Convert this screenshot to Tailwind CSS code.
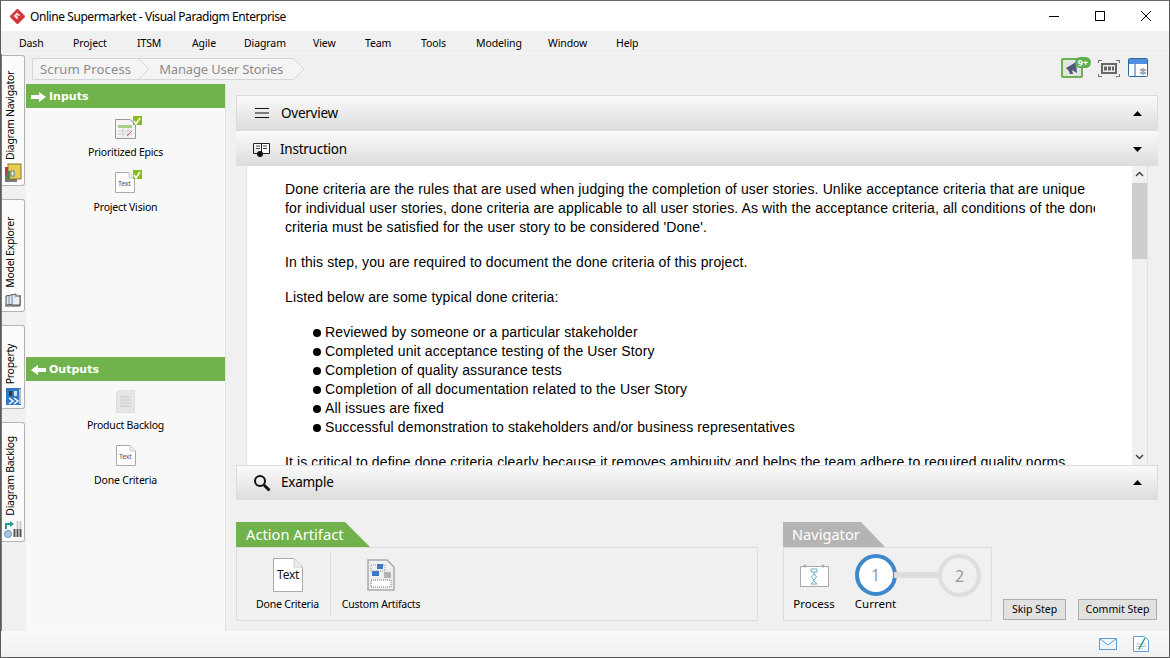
<!DOCTYPE html>
<html lang="en">
<head>
<meta charset="UTF-8">
<title>Online Supermarket - Visual Paradigm Enterprise</title>
<script src="https://cdn.jsdelivr.net/npm/@tailwindcss/browser@4"></script>
</head>
<body class="bg-[#f0f0f0] overflow-hidden">
<div class="w-[1170px] h-[658px] flex flex-col border border-[#5a5a5a] border-t-[#6a6a6a] text-black text-[12px] font-['Noto_Sans',sans-serif] overflow-hidden">

  <!-- title bar -->
  <div class="h-[30px] bg-white flex items-center shrink-0">
    <svg class="ml-[9px] w-[15px] h-[15px]" viewBox="0 0 15 15"><path d="M7.500 0 15 7.500 7.500 15 0 7.500Z" fill="#d0353a" stroke="#d0353a" stroke-linejoin="round"/><path d="M3.500 7 7 3.500 10.500 6.500 8 7 7.500 10.500Z" fill="#fbe4e4"/><path d="M6.500 6.500 8 6 7.500 8Z" fill="#d0353a"/></svg>
    <span class="ml-[5px] text-[12px] tracking-[-0.43px] pt-[1px]">Online Supermarket - Visual Paradigm Enterprise</span>
    <div class="ml-auto flex items-center">
      <svg class="w-[46px] h-[30px]" viewBox="0 0 46 30"><path d="M18 15.500H28" stroke="#000" fill="none"/></svg>
      <svg class="w-[46px] h-[30px] ml-[0px]" viewBox="0 0 46 30"><rect x="18.500" y="10.500" width="9" height="9" stroke="#000" fill="none"/></svg>
      <svg class="w-[46px] h-[30px]" viewBox="0 0 46 30"><path d="M18 10 28 20M28 10 18 20" stroke="#000" fill="none"/></svg>
    </div>
  </div>

  <!-- menu bar -->
  <div class="h-[22px] bg-[#f0f0f0] flex items-center shrink-0 relative text-[10.500px] tracking-[-0.1px] pt-[3px]">
    <span class="absolute left-[18px]">Dash</span>
    <span class="absolute left-[72px]">Project</span>
    <span class="absolute left-[136px]">ITSM</span>
    <span class="absolute left-[191px]">Agile</span>
    <span class="absolute left-[243px]">Diagram</span>
    <span class="absolute left-[312px]">View</span>
    <span class="absolute left-[364px]">Team</span>
    <span class="absolute left-[420px]">Tools</span>
    <span class="absolute left-[475px]">Modeling</span>
    <span class="absolute left-[547px]">Window</span>
    <span class="absolute left-[615px]">Help</span>
  </div>

  <div class="flex-1 flex min-h-0 border-t border-[#f8f8f8]">
    <!-- left rail -->
    <div class="w-[25px] shrink-0 flex flex-col pl-[0px] pt-[1px] text-[10.500px] tracking-[-0.3px] border-l border-[#7a7a7a]">
      <div class="w-[23px] h-[131px] bg-[#fbfbfb] border border-l-0 border-[#b4b4b4] rounded-r-[3px] flex flex-col items-center justify-end pb-[2px] gap-[3px]">
        <span class="[writing-mode:vertical-rl] rotate-180 leading-none whitespace-nowrap mr-[5px]">Diagram Navigator</span>
        <svg class="w-[18px] h-[20px]" viewBox="0 0 18 20"><rect x="1" y="9" width="12" height="10" fill="#777"/><rect x="4" y="1" width="13" height="15" fill="#e6cc55" stroke="#8a7a20"/><rect x="1" y="4" width="3" height="8" fill="#c8363a"/><rect x="3" y="8" width="3" height="8" fill="#2a9a3a"/><rect x="7" y="8" width="3" height="5" fill="#fff" stroke="#4a7ab0"/></svg>
      </div>
      <div class="w-[23px] h-[113px] mt-[13px] bg-[#fbfbfb] border border-l-0 border-[#b4b4b4] rounded-r-[3px] flex flex-col items-center justify-end pb-[3px] gap-[5px]">
        <span class="[writing-mode:vertical-rl] rotate-180 leading-none whitespace-nowrap mr-[5px]">Model Explorer</span>
        <svg class="w-[18px] h-[15px]" viewBox="0 0 18 15"><path d="M1 13H16V2" stroke="#444" fill="#ddd"/><path d="M2 3 12 1V11L2 12Z" fill="#dfe6ee" stroke="#555"/><path d="M12 3H16V12H8" fill="#eee" stroke="#555"/><path d="M5 3V11M8 2V11" stroke="#6b8cb0"/></svg>
      </div>
      <div class="w-[23px] h-[84px] mt-[13px] bg-[#fbfbfb] border border-l-0 border-[#b4b4b4] rounded-r-[3px] flex flex-col items-center justify-end pb-[3px] gap-[4px]">
        <span class="[writing-mode:vertical-rl] rotate-180 leading-none whitespace-nowrap mr-[5px]">Property</span>
        <svg class="w-[15px] h-[17px]" viewBox="0 0 15 17"><rect width="15" height="17" fill="#2f78c4"/><rect x="3" y="3" width="3" height="5" fill="#334"/><rect x="8" y="3" width="3" height="5" fill="#cfe2f5"/><path d="M3 10 7 13 3 16M8 10 12 13 8 16" stroke="#fff" fill="none" stroke-width="1.500"/><rect x="13" y="1" width="2" height="15" fill="#bbb"/></svg>
      </div>
      <div class="w-[23px] h-[120px] mt-[13px] bg-[#fbfbfb] border border-l-0 border-[#b4b4b4] rounded-r-[3px] flex flex-col items-center justify-end pb-[3px] gap-[4px]">
        <span class="[writing-mode:vertical-rl] rotate-180 leading-none whitespace-nowrap mr-[5px]">Diagram Backlog</span>
        <svg class="w-[18px] h-[18px]" viewBox="0 0 18 18"><path d="M2 9V4H7" stroke="#2a9a90" stroke-width="2" fill="none"/><path d="M6 1 10 4 6 7Z" fill="#2a9a90"/><circle cx="4" cy="14" r="3.500" fill="#a9c8e6" stroke="#6a94bc"/><path d="M10.500 9V17M13.500 9V17M16.500 9V17" stroke="#555" stroke-width="2"/><path d="M13.500 1V9M16.500 1V9" stroke="#ccc" stroke-width="2"/></svg>
      </div>
    </div>

    <div class="flex-1 flex flex-col min-w-0">
      <!-- breadcrumb row -->
      <div class="h-[30px] shrink-0 flex items-start">
        <div class="relative ml-[6px] mt-[4px] w-[272px] h-[22px] text-[13px] text-[#8c8c8c] flex items-center pt-[2px]">
          <svg class="absolute inset-0" width="272" height="22" viewBox="0 0 272 22"><path d="M.5.500H106.500L117 11 106.500 21.500H.5Z" fill="#f4f4f4" stroke="#d6d6d6"/><path d="M106.500.5H261.500L272 11 261.500 21.500H106.500L117 11Z" fill="#f4f4f4" stroke="#d6d6d6"/></svg>
          <span class="relative ml-[8px] tracking-[0.15px]">Scrum Process</span>
          <span class="relative ml-[28px] tracking-[-0.15px]">Manage User Stories</span>
        </div>
        <div class="ml-auto flex items-center mr-[21px] mt-[4px]">
          <div class="relative w-[22px] h-[20px] bg-[#e4e4e4] border-2 border-[#6fb04f] rounded-[2px] flex items-center justify-center">
            <svg class="w-[14px] h-[14px]" viewBox="0 0 14 14"><path d="M1 7 11 1 12 12 7 9 8 13 5 13 3.500 9.500Z" fill="#4d5d75"/></svg>
            <span class="absolute -top-[3px] left-[12px] w-[16px] h-[11px] rounded-full bg-[#5cb050] text-white text-[9px] leading-[11px] text-center font-bold">9+</span>
          </div>
          <svg class="w-[22px] h-[17px] ml-[15px]" viewBox="0 0 22 17"><path d="M4 4H18V13H4Z" fill="#eee" stroke="#666" stroke-width="2"/><path d="M6 6.500H9V10.500H6ZM10 6.500H13V10.500H10ZM14 6.500H16V10.500H14Z" fill="#666"/><path d="M0 3V0H4M18 0H22V3M0 14V17H4M18 17H22V14" fill="none" stroke="#777" stroke-width="2"/></svg>
          <svg class="w-[20px] h-[20px] ml-[8px]" viewBox="0 0 20 20"><rect x=".5" y=".5" width="19" height="18" rx="1" fill="#fff" stroke="#2c6a9a"/><rect x="1" y="1" width="18" height="5" fill="#4e8fe0"/><path d="M7 6V19" stroke="#2c6a9a"/><path d="M11 12 15 10 19 12 15 14ZM11 15 15 13 19 15 15 17Z" fill="#9aa8b8"/></svg>
        </div>
      </div>

      <div class="flex-1 flex min-h-0">
        <!-- inputs / outputs panel -->
        <div class="w-[199px] shrink-0 bg-[#f8f8f8] flex flex-col text-[10.500px] tracking-[-0.2px] border-r border-[#e2e2e2] box-content">
          <div class="h-[24px] bg-[#70b34c] flex items-center pl-[5px] text-white font-bold font-['DejaVu_Sans',sans-serif] text-[11px] gap-[3px] pt-[2px] tracking-normal">
            <svg class="w-[15px] h-[10px]" viewBox="0 0 15 10"><path d="M0 3H8V0L15 5 8 10V7H0Z" fill="#fff"/></svg>
            <span>Inputs</span>
          </div>
          <div class="h-[249px] flex flex-col items-center pt-[8px]">
            <div class="relative w-[26px] h-[24px]">
              <svg class="w-[21px] h-[20px] mt-[3px] ml-[2px]" viewBox="0 0 21 20"><path d="M.5.500H15L20.500 5.500V19.500H.5Z" fill="#f4f4f4" stroke="#999"/><rect x="3" y="6" width="14" height="3" fill="#a8d08d"/><path d="M3 12H17M3 15H17M8 9V18M13 9V18" stroke="#ccc"/><path d="M12 17 17 12" stroke="#c86060"/></svg>
              <span class="absolute top-0 right-[-3px] w-[9px] h-[9px] bg-[#8cbc1c] flex items-center justify-center"><svg class="w-[8px] h-[8px]" viewBox="0 0 8 8"><path d="M1 4 3 7 7 1" stroke="#fff" stroke-width="1.500" fill="none"/></svg></span>
            </div>
            <span class="mt-[5px] leading-[15px]">Prioritized Epics</span>
            <div class="relative w-[26px] h-[24px] mt-[10px]">
              <svg class="w-[20px] h-[21px] mt-[2px] ml-[2px]" viewBox="0 0 20 21"><path d="M.5.500H14L19.500 6V20.500H.5Z" fill="#fff" stroke="#aaa"/><path d="M14 .5V6H19.500" fill="#eee" stroke="#ccc"/><text x="3" y="14" font-size="7" fill="#555" font-family="'Noto Sans',sans-serif">Text</text></svg>
              <span class="absolute top-0 right-[-3px] w-[9px] h-[9px] bg-[#8cbc1c] flex items-center justify-center"><svg class="w-[8px] h-[8px]" viewBox="0 0 8 8"><path d="M1 4 3 7 7 1" stroke="#fff" stroke-width="1.500" fill="none"/></svg></span>
            </div>
            <span class="mt-[6px] leading-[15px]">Project Vision</span>
          </div>
          <div class="h-[24px] bg-[#70b34c] flex items-center pl-[5px] text-white font-bold font-['DejaVu_Sans',sans-serif] text-[11px] gap-[3px] pt-[2px] tracking-normal">
            <svg class="w-[15px] h-[10px]" viewBox="0 0 15 10"><path d="M15 3H7V0L0 5 7 10V7H15Z" fill="#fff"/></svg>
            <span>Outputs</span>
          </div>
          <div class="flex flex-col items-center pt-[9px]">
            <svg class="w-[19px] h-[23px]" viewBox="0 0 19 23"><path d="M3 0H18.500V22.500H.5V3Z" fill="#e6e6e6" stroke="#ddd"/><path d="M4 7H15M4 10H15M4 13H15M4 16H15" stroke="#c8c8c8"/></svg>
            <span class="mt-[5px] leading-[15px]">Product Backlog</span>
            <svg class="w-[20px] h-[21px] mt-[12px]" viewBox="0 0 20 21"><path d="M.5.500H14L19.500 6V20.500H.5Z" fill="#fff" stroke="#aaa"/><path d="M14 .5V6H19.500" fill="#eee" stroke="#ccc"/><text x="3" y="14" font-size="7" fill="#555" font-family="'Noto Sans',sans-serif">Text</text></svg>
            <span class="mt-[7px] leading-[15px]">Done Criteria</span>
          </div>
        </div>

        <!-- main column -->
        <div class="flex-1 min-w-0 flex flex-col pl-[10px] pr-[11px] pt-[11px]">
          <div class="h-[405px] flex flex-col shrink-0 text-[13.500px] tracking-[-0.25px]">
            <div class="h-[36px] shrink-0 border border-b-0 border-[#dcdcdc] bg-gradient-to-b from-[#fafafa] to-[#dcdcdc] flex items-center pl-[17px] pr-[15px] pb-[1px]">
              <svg class="w-[16px] h-[12px]" viewBox="0 0 16 12"><path d="M1 1.500H15M1 6H15M1 10.500H15" stroke="#111"/></svg>
              <span class="ml-[11px]">Overview</span>
              <svg class="ml-auto w-[9px] h-[5px]" viewBox="0 0 10 6" preserveAspectRatio="none"><path d="M5 0 10 6H0Z" fill="#000"/></svg>
            </div>
            <div class="h-[35px] shrink-0 bg-gradient-to-b from-[#fafafa] to-[#dcdcdc] flex items-center pl-[17px] pr-[16px] pt-[1px]">
              <svg class="w-[17px] h-[15px]" viewBox="0 0 17 15"><path d="M.5 1.500H8.500V11M8.500 1.500H16.500V11.500H9" fill="#fff" stroke="#222"/><path d="M.5 1.500V11.500H4" stroke="#222" fill="none"/><path d="M3 4H7M3 6.500H7M10 4H14M10 6.500H14" stroke="#444"/><circle cx="7" cy="12" r="3" fill="#111"/></svg>
              <span class="ml-[10px]">Instruction</span>
              <svg class="ml-auto w-[9px] h-[5px]" viewBox="0 0 10 6" preserveAspectRatio="none"><path d="M0 0H10L5 6Z" fill="#000"/></svg>
            </div>
            <div class="h-[299px] shrink-0 ml-[10px] mr-[10px] bg-white border-l border-[#e0e0e0] border-r flex min-h-0 overflow-hidden">
              <div class="flex-1 min-w-0 pl-[38px] pr-[37px] pt-[14px] overflow-hidden">
                <div class="font-['Liberation_Sans',sans-serif] text-[14px] tracking-[0.115px] leading-[19px] whitespace-nowrap overflow-hidden">
                  <p>Done criteria are the rules that are used when judging the completion of user stories. Unlike acceptance criteria that are unique</p>
                  <p>for individual user stories, done criteria are applicable to all user stories. As with the acceptance criteria, all conditions of the done</p>
                  <p>criteria must be satisfied for the user story to be considered 'Done'.</p>
                  <p class="mt-[16px]">In this step, you are required to document the done criteria of this project.</p>
                  <p class="mt-[16px]">Listed below are some typical done criteria:</p>
                  <ul class="mt-[16px] ml-[28px]">
                    <li class="flex items-center gap-[4px]"><span class="w-[8px] h-[8px] rounded-full bg-black"></span><span>Reviewed by someone or a particular stakeholder</span></li>
                    <li class="flex items-center gap-[4px]"><span class="w-[8px] h-[8px] rounded-full bg-black"></span><span>Completed unit acceptance testing of the User Story</span></li>
                    <li class="flex items-center gap-[4px]"><span class="w-[8px] h-[8px] rounded-full bg-black"></span><span>Completion of quality assurance tests</span></li>
                    <li class="flex items-center gap-[4px]"><span class="w-[8px] h-[8px] rounded-full bg-black"></span><span>Completion of all documentation related to the User Story</span></li>
                    <li class="flex items-center gap-[4px]"><span class="w-[8px] h-[8px] rounded-full bg-black"></span><span>All issues are fixed</span></li>
                    <li class="flex items-center gap-[4px]"><span class="w-[8px] h-[8px] rounded-full bg-black"></span><span>Successful demonstration to stakeholders and/or business representatives</span></li>
                  </ul>
                  <p class="mt-[16px]">It is critical to define done criteria clearly because it removes ambiguity and helps the team adhere to required quality norms.</p>
                </div>
              </div>
              <!-- scrollbar -->
              <div class="w-[15px] shrink-0 bg-[#f0f0f0] flex flex-col items-center">
                <svg class="w-[15px] h-[17px]" viewBox="0 0 15 17"><path d="M4 10 7.500 6.500 11 10" stroke="#444" stroke-width="1.500" fill="none"/></svg>
                <div class="w-[15px] h-[76px] bg-[#cdcdcd]"></div>
                <svg class="w-[15px] h-[17px] mt-auto" viewBox="0 0 15 17"><path d="M4 7 7.500 10.500 11 7" stroke="#444" stroke-width="1.500" fill="none"/></svg>
              </div>
            </div>
            <div class="h-[35px] shrink-0 border border-[#dcdcdc] border-b-0 bg-gradient-to-b from-[#fafafa] to-[#dcdcdc] flex items-center pl-[16px] pr-[15px] pb-[1px]">
              <svg class="w-[18px] h-[18px]" viewBox="0 0 18 18"><circle cx="7" cy="7" r="5" fill="none" stroke="#111" stroke-width="2"/><path d="M11 11 16.500 16.500" stroke="#111" stroke-width="3"/></svg>
              <span class="ml-[10px]">Example</span>
              <svg class="ml-auto w-[9px] h-[5px]" viewBox="0 0 10 6" preserveAspectRatio="none"><path d="M5 0 10 6H0Z" fill="#000"/></svg>
            </div>
          </div>

          <!-- bottom row -->
          <div class="mt-[22px] flex items-start">
            <div class="w-[522px]">
              <div class="h-[25px] w-[134px] bg-[#70b34c] [clip-path:polygon(0_0,109px_0,134px_100%,0_100%)] text-white text-[14.700px] flex items-center pl-[10px]">Action Artifact</div>
              <div class="h-[74px] border border-[#dcdcdc] flex items-stretch text-[10.500px] tracking-[-0.2px]">
                <div class="w-[94px] my-[4px] pl-[8px] border-r border-[#dcdcdc] flex flex-col items-center pt-[6px]">
                  <svg class="w-[30px] h-[34px]" viewBox="0 0 30 34"><path d="M.5.500H21L29.500 9V33.500H.5Z" fill="#fff" stroke="#aaa"/><path d="M21 .5V9H29.500" fill="#eee" stroke="#ccc"/><text x="4" y="21" font-size="12" fill="#111" font-family="'Noto Sans',sans-serif">Text</text></svg>
                  <span class="mt-[5px] leading-[15px]">Done Criteria</span>
                </div>
                <div class="w-[100px] my-[4px] flex flex-col items-center pt-[7px]">
                  <svg class="w-[28px] h-[32px]" viewBox="0 0 28 32"><path d="M1 1H20L27 8V31H1Z" fill="#eee" stroke="#aaa" stroke-width="1.500"/><rect x="4" y="6" width="14" height="6" fill="none" stroke="#999" stroke-dasharray="1 1"/><rect x="10" y="5" width="6" height="5" fill="#3f77c4"/><rect x="5" y="12" width="7" height="5" fill="#3f77c4"/><path d="M17 14H24M17 16H24M17 18H24" stroke="#777"/><rect x="4" y="21" width="20" height="7" fill="#fff" stroke="#777" stroke-dasharray="1 1"/></svg>
                  <span class="mt-[6px] leading-[15px]">Custom Artifacts</span>
                </div>
              </div>
            </div>
            <div class="ml-[25px] w-[209px]">
              <div class="h-[25px] w-[102px] bg-[#b4b4b4] [clip-path:polygon(0_0,78px_0,102px_100%,0_100%)] text-white text-[14.600px] flex items-center pl-[9px]">Navigator</div>
              <div class="h-[74px] border border-[#dcdcdc] flex text-[11.500px]">
                <div class="w-[60px] flex flex-col items-center pt-[16px]">
                  <svg class="w-[29px] h-[23px]" viewBox="0 0 29 23"><rect x=".5" y="2.500" width="28" height="20" fill="#fff" stroke="#aaa"/><circle cx="5" cy="2" r="1.500" fill="#aaa"/><circle cx="23" cy="2" r="1.500" fill="#aaa"/><path d="M11 5H17V8H11ZM14 8V10M11.500 13 14 10 16.500 13 14 16ZM14 16V18M11 20 14 17 17 20Z" fill="none" stroke="#6aaec8"/></svg>
                  <span class="mt-[9px] leading-[16px]">Process</span>
                </div>
                <div class="w-[63px] flex flex-col items-center pt-[6px]">
                  <div class="w-[42px] h-[42px] rounded-full border-[4px] border-[#3d87cb] bg-white flex items-center justify-center text-[16px] text-[#999]">1</div>
                  <span class="leading-[16px]">Current</span>
                </div>
                <div class="flex items-start pt-[6px] -ml-[13px]">
                  <div class="w-[44px] h-[6px] bg-[#dedede] mt-[18px]"></div>
                  <div class="w-[43px] h-[43px] rounded-full border-[4px] border-[#dedede] bg-[#f0f0f0] flex items-center justify-center text-[16px] text-[#999]">2</div>
                </div>
              </div>
            </div>
            <button class="ml-[11px] mt-[77px] w-[63px] h-[21px] bg-[#e1e1e1] border border-[#adadad] text-[10.500px] leading-none">Skip Step</button>
            <button class="ml-[12px] mt-[77px] w-[79px] h-[21px] bg-[#e1e1e1] border border-[#adadad] text-[10.500px] leading-none">Commit Step</button>
          </div>
        </div>
      </div>
    </div>
  </div>

  <!-- status bar -->
  <div class="h-[26px] shrink-0 bg-gradient-to-b from-[#fafafa] to-[#f0f0f0] flex items-center justify-end pr-[20px]">
    <svg class="w-[18px] h-[12px]" viewBox="0 0 18 12"><rect x=".5" y=".5" width="17" height="11" fill="#f0f6fc" stroke="#5aa0d8"/><path d="M.5.500 9 7 17.500.5" fill="none" stroke="#5aa0d8"/></svg>
    <svg class="w-[16px] h-[16px] ml-[16px]" viewBox="0 0 16 16"><path d="M.5.500H11L15.500 4V15.500H.5Z" fill="#fff" stroke="#5aa0d8"/><path d="M3 8H13M3 10.500H13M3 13H10" stroke="#bbb"/><path d="M6 13 12 2" stroke="#2a9a90" stroke-width="1.500"/></svg>
  </div>
</div>
</body>
</html>
